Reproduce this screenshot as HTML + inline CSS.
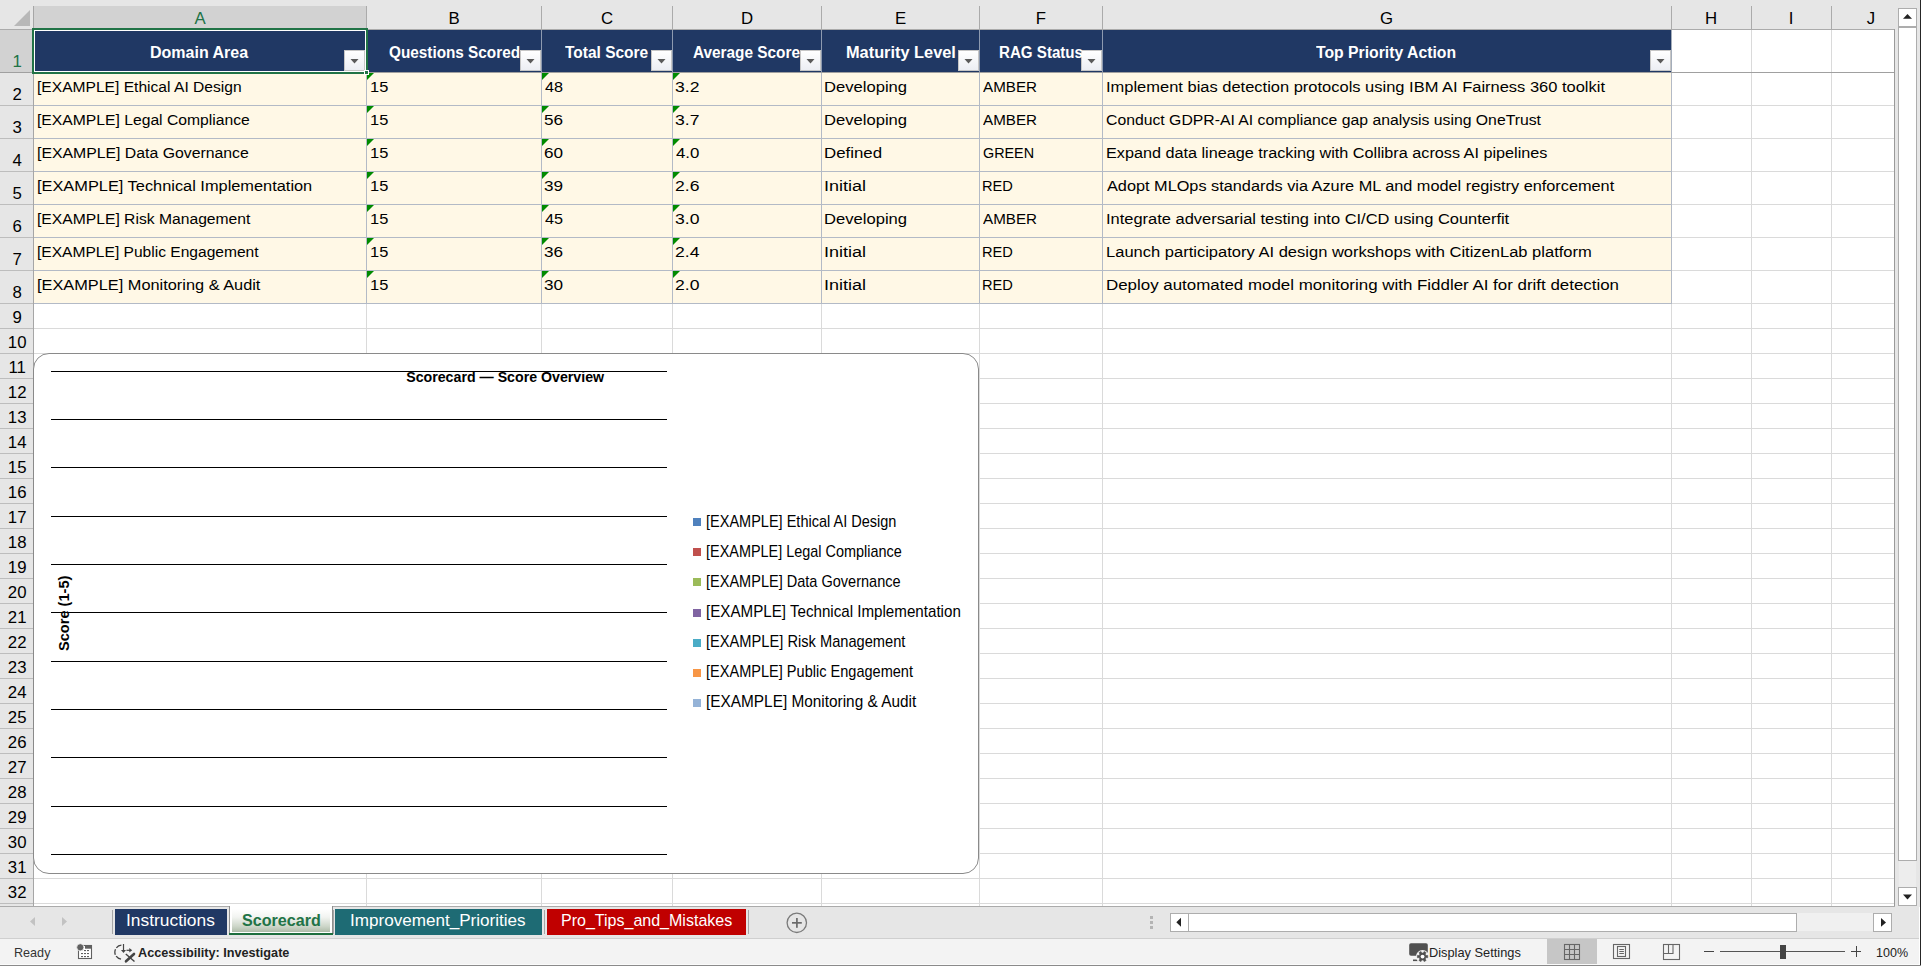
<!DOCTYPE html><html><head><meta charset="utf-8"><style>html,body{margin:0;padding:0;}body{width:1921px;height:966px;overflow:hidden;position:relative;font-family:"Liberation Sans",sans-serif;}body>div,body>svg{position:absolute;}.t{position:absolute;white-space:pre;line-height:1;transform-origin:0 0;}.dd{width:19px;height:19px;border:1px solid #c6c6c6;background:linear-gradient(#ffffff,#eceef3);box-sizing:content-box;}.dd svg{position:absolute;left:0;top:0}</style></head><body><div style="left:0px;top:0px;width:1921px;height:966px;background:#ffffff;"></div><div style="left:0px;top:0px;width:1921px;height:29px;background:#e6e6e6;"></div><div style="left:34px;top:6px;width:332px;height:23px;background:#d2d2d2;"></div><div style="left:366px;top:6px;width:1px;height:23px;background:#ababab;"></div><div style="left:541px;top:6px;width:1px;height:23px;background:#ababab;"></div><div style="left:672px;top:6px;width:1px;height:23px;background:#ababab;"></div><div style="left:821px;top:6px;width:1px;height:23px;background:#ababab;"></div><div style="left:979px;top:6px;width:1px;height:23px;background:#ababab;"></div><div style="left:1102px;top:6px;width:1px;height:23px;background:#ababab;"></div><div style="left:1671px;top:6px;width:1px;height:23px;background:#ababab;"></div><div style="left:1751px;top:6px;width:1px;height:23px;background:#ababab;"></div><div style="left:1831px;top:6px;width:1px;height:23px;background:#ababab;"></div><div style="left:0px;top:29px;width:1895px;height:1px;background:#ababab;"></div><div style="left:0px;top:30px;width:33px;height:876px;background:#e6e6e6;"></div><div style="left:0px;top:30px;width:33px;height:42px;background:#d2d2d2;"></div><div style="left:33px;top:6px;width:1px;height:900px;background:#a6a6a6;"></div><div style="left:0px;top:72px;width:33px;height:1px;background:#bdbdbd;"></div><div style="left:0px;top:105px;width:33px;height:1px;background:#bdbdbd;"></div><div style="left:0px;top:138px;width:33px;height:1px;background:#bdbdbd;"></div><div style="left:0px;top:171px;width:33px;height:1px;background:#bdbdbd;"></div><div style="left:0px;top:204px;width:33px;height:1px;background:#bdbdbd;"></div><div style="left:0px;top:237px;width:33px;height:1px;background:#bdbdbd;"></div><div style="left:0px;top:270px;width:33px;height:1px;background:#bdbdbd;"></div><div style="left:0px;top:303px;width:33px;height:1px;background:#bdbdbd;"></div><div style="left:0px;top:328px;width:33px;height:1px;background:#bdbdbd;"></div><div style="left:0px;top:353px;width:33px;height:1px;background:#bdbdbd;"></div><div style="left:0px;top:378px;width:33px;height:1px;background:#bdbdbd;"></div><div style="left:0px;top:403px;width:33px;height:1px;background:#bdbdbd;"></div><div style="left:0px;top:428px;width:33px;height:1px;background:#bdbdbd;"></div><div style="left:0px;top:453px;width:33px;height:1px;background:#bdbdbd;"></div><div style="left:0px;top:478px;width:33px;height:1px;background:#bdbdbd;"></div><div style="left:0px;top:503px;width:33px;height:1px;background:#bdbdbd;"></div><div style="left:0px;top:528px;width:33px;height:1px;background:#bdbdbd;"></div><div style="left:0px;top:553px;width:33px;height:1px;background:#bdbdbd;"></div><div style="left:0px;top:578px;width:33px;height:1px;background:#bdbdbd;"></div><div style="left:0px;top:603px;width:33px;height:1px;background:#bdbdbd;"></div><div style="left:0px;top:628px;width:33px;height:1px;background:#bdbdbd;"></div><div style="left:0px;top:653px;width:33px;height:1px;background:#bdbdbd;"></div><div style="left:0px;top:678px;width:33px;height:1px;background:#bdbdbd;"></div><div style="left:0px;top:703px;width:33px;height:1px;background:#bdbdbd;"></div><div style="left:0px;top:728px;width:33px;height:1px;background:#bdbdbd;"></div><div style="left:0px;top:753px;width:33px;height:1px;background:#bdbdbd;"></div><div style="left:0px;top:778px;width:33px;height:1px;background:#bdbdbd;"></div><div style="left:0px;top:803px;width:33px;height:1px;background:#bdbdbd;"></div><div style="left:0px;top:828px;width:33px;height:1px;background:#bdbdbd;"></div><div style="left:0px;top:853px;width:33px;height:1px;background:#bdbdbd;"></div><div style="left:0px;top:878px;width:33px;height:1px;background:#bdbdbd;"></div><div style="left:0px;top:903px;width:33px;height:1px;background:#bdbdbd;"></div><svg style="left:13px;top:9px" width="18" height="18"><polygon points="17,1 17,17 1,17" fill="#b8b8b8"/></svg><div style="left:34px;top:105px;width:1860px;height:1px;background:#dadada;"></div><div style="left:34px;top:138px;width:1860px;height:1px;background:#dadada;"></div><div style="left:34px;top:171px;width:1860px;height:1px;background:#dadada;"></div><div style="left:34px;top:204px;width:1860px;height:1px;background:#dadada;"></div><div style="left:34px;top:237px;width:1860px;height:1px;background:#dadada;"></div><div style="left:34px;top:270px;width:1860px;height:1px;background:#dadada;"></div><div style="left:34px;top:303px;width:1860px;height:1px;background:#dadada;"></div><div style="left:34px;top:328px;width:1860px;height:1px;background:#dadada;"></div><div style="left:34px;top:353px;width:1860px;height:1px;background:#dadada;"></div><div style="left:34px;top:378px;width:1860px;height:1px;background:#dadada;"></div><div style="left:34px;top:403px;width:1860px;height:1px;background:#dadada;"></div><div style="left:34px;top:428px;width:1860px;height:1px;background:#dadada;"></div><div style="left:34px;top:453px;width:1860px;height:1px;background:#dadada;"></div><div style="left:34px;top:478px;width:1860px;height:1px;background:#dadada;"></div><div style="left:34px;top:503px;width:1860px;height:1px;background:#dadada;"></div><div style="left:34px;top:528px;width:1860px;height:1px;background:#dadada;"></div><div style="left:34px;top:553px;width:1860px;height:1px;background:#dadada;"></div><div style="left:34px;top:578px;width:1860px;height:1px;background:#dadada;"></div><div style="left:34px;top:603px;width:1860px;height:1px;background:#dadada;"></div><div style="left:34px;top:628px;width:1860px;height:1px;background:#dadada;"></div><div style="left:34px;top:653px;width:1860px;height:1px;background:#dadada;"></div><div style="left:34px;top:678px;width:1860px;height:1px;background:#dadada;"></div><div style="left:34px;top:703px;width:1860px;height:1px;background:#dadada;"></div><div style="left:34px;top:728px;width:1860px;height:1px;background:#dadada;"></div><div style="left:34px;top:753px;width:1860px;height:1px;background:#dadada;"></div><div style="left:34px;top:778px;width:1860px;height:1px;background:#dadada;"></div><div style="left:34px;top:803px;width:1860px;height:1px;background:#dadada;"></div><div style="left:34px;top:828px;width:1860px;height:1px;background:#dadada;"></div><div style="left:34px;top:853px;width:1860px;height:1px;background:#dadada;"></div><div style="left:34px;top:878px;width:1860px;height:1px;background:#dadada;"></div><div style="left:34px;top:903px;width:1860px;height:1px;background:#dadada;"></div><div style="left:366px;top:30px;width:1px;height:876px;background:#dadada;"></div><div style="left:541px;top:30px;width:1px;height:876px;background:#dadada;"></div><div style="left:672px;top:30px;width:1px;height:876px;background:#dadada;"></div><div style="left:821px;top:30px;width:1px;height:876px;background:#dadada;"></div><div style="left:979px;top:30px;width:1px;height:876px;background:#dadada;"></div><div style="left:1102px;top:30px;width:1px;height:876px;background:#dadada;"></div><div style="left:1671px;top:30px;width:1px;height:876px;background:#dadada;"></div><div style="left:1751px;top:30px;width:1px;height:876px;background:#dadada;"></div><div style="left:1831px;top:30px;width:1px;height:876px;background:#dadada;"></div><div style="left:0px;top:72px;width:1895px;height:1px;background:#a0a0a0;"></div><div style="left:1894px;top:29px;width:1px;height:877px;background:#9a9a9a;"></div><div style="left:34px;top:30px;width:1637px;height:42px;background:#203864;"></div><div style="left:34px;top:73px;width:1637px;height:32px;background:#fff8e6;"></div><div style="left:34px;top:106px;width:1637px;height:32px;background:#fff8e6;"></div><div style="left:34px;top:139px;width:1637px;height:32px;background:#fff8e6;"></div><div style="left:34px;top:172px;width:1637px;height:32px;background:#fff8e6;"></div><div style="left:34px;top:205px;width:1637px;height:32px;background:#fff8e6;"></div><div style="left:34px;top:238px;width:1637px;height:32px;background:#fff8e6;"></div><div style="left:34px;top:271px;width:1637px;height:32px;background:#fff8e6;"></div><div style="left:34px;top:105px;width:1637px;height:1px;background:#b3bac6;"></div><div style="left:34px;top:138px;width:1637px;height:1px;background:#b3bac6;"></div><div style="left:34px;top:171px;width:1637px;height:1px;background:#b3bac6;"></div><div style="left:34px;top:204px;width:1637px;height:1px;background:#b3bac6;"></div><div style="left:34px;top:237px;width:1637px;height:1px;background:#b3bac6;"></div><div style="left:34px;top:270px;width:1637px;height:1px;background:#b3bac6;"></div><div style="left:34px;top:303px;width:1637px;height:1px;background:#b3bac6;"></div><div style="left:366px;top:73px;width:1px;height:231px;background:#b3bac6;"></div><div style="left:541px;top:73px;width:1px;height:231px;background:#b3bac6;"></div><div style="left:672px;top:73px;width:1px;height:231px;background:#b3bac6;"></div><div style="left:821px;top:73px;width:1px;height:231px;background:#b3bac6;"></div><div style="left:979px;top:73px;width:1px;height:231px;background:#b3bac6;"></div><div style="left:1102px;top:73px;width:1px;height:231px;background:#b3bac6;"></div><div style="left:1671px;top:73px;width:1px;height:231px;background:#b3bac6;"></div><div style="left:366px;top:30px;width:1px;height:42px;background:#8d9ab0;"></div><div style="left:541px;top:30px;width:1px;height:42px;background:#8d9ab0;"></div><div style="left:672px;top:30px;width:1px;height:42px;background:#8d9ab0;"></div><div style="left:821px;top:30px;width:1px;height:42px;background:#8d9ab0;"></div><div style="left:979px;top:30px;width:1px;height:42px;background:#8d9ab0;"></div><div style="left:1102px;top:30px;width:1px;height:42px;background:#8d9ab0;"></div><div style="left:1671px;top:30px;width:1px;height:42px;background:#a4adba;"></div><div class="dd" style="left:344px;top:50px"><svg width="19" height="19"><polygon points="5.5,8 13.5,8 9.5,12.5" fill="#5a5a5a"/></svg></div><div class="dd" style="left:520px;top:50px"><svg width="19" height="19"><polygon points="5.5,8 13.5,8 9.5,12.5" fill="#5a5a5a"/></svg></div><div class="dd" style="left:651px;top:50px"><svg width="19" height="19"><polygon points="5.5,8 13.5,8 9.5,12.5" fill="#5a5a5a"/></svg></div><div class="dd" style="left:800px;top:50px"><svg width="19" height="19"><polygon points="5.5,8 13.5,8 9.5,12.5" fill="#5a5a5a"/></svg></div><div class="dd" style="left:958px;top:50px"><svg width="19" height="19"><polygon points="5.5,8 13.5,8 9.5,12.5" fill="#5a5a5a"/></svg></div><div class="dd" style="left:1081px;top:50px"><svg width="19" height="19"><polygon points="5.5,8 13.5,8 9.5,12.5" fill="#5a5a5a"/></svg></div><div class="dd" style="left:1650px;top:50px"><svg width="19" height="19"><polygon points="5.5,8 13.5,8 9.5,12.5" fill="#5a5a5a"/></svg></div><svg style="left:367px;top:73px" width="8" height="8"><polygon points="0,0 7,0 0,7" fill="#008a00"/></svg><svg style="left:542px;top:73px" width="8" height="8"><polygon points="0,0 7,0 0,7" fill="#008a00"/></svg><svg style="left:673px;top:73px" width="8" height="8"><polygon points="0,0 7,0 0,7" fill="#008a00"/></svg><svg style="left:367px;top:106px" width="8" height="8"><polygon points="0,0 7,0 0,7" fill="#008a00"/></svg><svg style="left:542px;top:106px" width="8" height="8"><polygon points="0,0 7,0 0,7" fill="#008a00"/></svg><svg style="left:673px;top:106px" width="8" height="8"><polygon points="0,0 7,0 0,7" fill="#008a00"/></svg><svg style="left:367px;top:139px" width="8" height="8"><polygon points="0,0 7,0 0,7" fill="#008a00"/></svg><svg style="left:542px;top:139px" width="8" height="8"><polygon points="0,0 7,0 0,7" fill="#008a00"/></svg><svg style="left:673px;top:139px" width="8" height="8"><polygon points="0,0 7,0 0,7" fill="#008a00"/></svg><svg style="left:367px;top:172px" width="8" height="8"><polygon points="0,0 7,0 0,7" fill="#008a00"/></svg><svg style="left:542px;top:172px" width="8" height="8"><polygon points="0,0 7,0 0,7" fill="#008a00"/></svg><svg style="left:673px;top:172px" width="8" height="8"><polygon points="0,0 7,0 0,7" fill="#008a00"/></svg><svg style="left:367px;top:205px" width="8" height="8"><polygon points="0,0 7,0 0,7" fill="#008a00"/></svg><svg style="left:542px;top:205px" width="8" height="8"><polygon points="0,0 7,0 0,7" fill="#008a00"/></svg><svg style="left:673px;top:205px" width="8" height="8"><polygon points="0,0 7,0 0,7" fill="#008a00"/></svg><svg style="left:367px;top:238px" width="8" height="8"><polygon points="0,0 7,0 0,7" fill="#008a00"/></svg><svg style="left:542px;top:238px" width="8" height="8"><polygon points="0,0 7,0 0,7" fill="#008a00"/></svg><svg style="left:673px;top:238px" width="8" height="8"><polygon points="0,0 7,0 0,7" fill="#008a00"/></svg><svg style="left:367px;top:271px" width="8" height="8"><polygon points="0,0 7,0 0,7" fill="#008a00"/></svg><svg style="left:542px;top:271px" width="8" height="8"><polygon points="0,0 7,0 0,7" fill="#008a00"/></svg><svg style="left:673px;top:271px" width="8" height="8"><polygon points="0,0 7,0 0,7" fill="#008a00"/></svg><div style="left:32px;top:28px;width:332px;height:42px;border:2px solid #217346;background:transparent"></div><div style="left:34px;top:30px;width:332px;height:42px;border:1px solid #fff;background:transparent;box-sizing:border-box"></div><div style="left:364px;top:70px;width:3px;height:3px;background:#217346;border:1px solid #fff;box-sizing:content-box"></div><div style="left:33px;top:353px;width:944px;height:519px;border:1px solid #8a8a8a;border-radius:16px;background:#fff"></div><div style="left:51px;top:371px;width:616px;height:1px;background:#000"></div><div style="left:51px;top:419px;width:616px;height:1px;background:#000"></div><div style="left:51px;top:467px;width:616px;height:1px;background:#000"></div><div style="left:51px;top:516px;width:616px;height:1px;background:#000"></div><div style="left:51px;top:564px;width:616px;height:1px;background:#000"></div><div style="left:51px;top:612px;width:616px;height:1px;background:#000"></div><div style="left:51px;top:661px;width:616px;height:1px;background:#000"></div><div style="left:51px;top:709px;width:616px;height:1px;background:#000"></div><div style="left:51px;top:757px;width:616px;height:1px;background:#000"></div><div style="left:51px;top:806px;width:616px;height:1px;background:#000"></div><div style="left:51px;top:854px;width:616px;height:1px;background:#000"></div><div style="left:693px;top:518px;width:8px;height:8px;background:#4f81bd;"></div><div style="left:693px;top:548px;width:8px;height:8px;background:#c0504d;"></div><div style="left:693px;top:578px;width:8px;height:8px;background:#9bbb59;"></div><div style="left:693px;top:609px;width:8px;height:8px;background:#8064a2;"></div><div style="left:693px;top:639px;width:8px;height:8px;background:#4bacc6;"></div><div style="left:693px;top:669px;width:8px;height:8px;background:#f79646;"></div><div style="left:693px;top:699px;width:8px;height:8px;background:#95b3d7;"></div><div class="t" style="left:0px;top:0px;width:0;height:0;overflow:visible"><div style="position:absolute;left:57px;top:651px;transform-origin:0 0;transform:rotate(-90deg);font:700 14.6px 'Liberation Sans';white-space:pre;line-height:1">Score (1-5)</div></div><div style="left:1895px;top:0px;width:26px;height:907px;background:#e6e6e6;"></div><div style="left:1898px;top:8px;width:17px;height:17px;border:1px solid #adadad;background:#fff"></div><svg style="left:1898px;top:8px" width="19" height="19"><polygon points="5,10.8 14,10.8 9.5,6" fill="#222"/></svg><div style="left:1898px;top:27px;width:17px;height:832px;border:1px solid #adadad;background:#fff"></div><div style="left:1899px;top:861px;width:17px;height:26px;background:#ededed;"></div><div style="left:1898px;top:887px;width:17px;height:17px;border:1px solid #adadad;background:#fff"></div><svg style="left:1898px;top:887px" width="19" height="19"><polygon points="5,7.4 14,7.4 9.5,12.4" fill="#222"/></svg><div style="left:1920px;top:0px;width:1px;height:966px;background:#262626;"></div><div style="left:0px;top:906px;width:1895px;height:1px;background:#ababab;"></div><div style="left:0px;top:907px;width:1919px;height:31px;background:#e6e6e6;"></div><div style="left:0px;top:938px;width:1919px;height:1px;background:#cfcfcf;"></div><svg style="left:28px;top:916px" width="42" height="12"><polygon points="7,1 7,10 2,5.5" fill="#c2c2c2"/><polygon points="34,1 34,10 39,5.5" fill="#c2c2c2"/></svg><div style="left:112px;top:910px;width:1px;height:24px;background:#a6a6a6;"></div><div style="left:115px;top:909px;width:112px;height:26px;background:#203864;"></div><div style="left:229px;top:906px;width:104px;height:29px;background:#fff;border-left:1px solid #8e8e8e;border-right:1px solid #8e8e8e;box-sizing:border-box"></div><div style="left:232px;top:909px;width:98px;height:23px;background:linear-gradient(#ffffff 0%,#f2f4f1 35%,#cdd6c9 75%,#aebba8 100%)"></div><div style="left:229px;top:933px;width:104px;height:2px;background:#1d6e3d;"></div><div style="left:333px;top:910px;width:1px;height:24px;background:#a6a6a6;"></div><div style="left:335px;top:909px;width:207px;height:26px;background:#1e6b74;"></div><div style="left:544px;top:910px;width:1px;height:24px;background:#a6a6a6;"></div><div style="left:547px;top:909px;width:199px;height:26px;background:#c00000;"></div><div style="left:748px;top:910px;width:1px;height:24px;background:#a6a6a6;"></div><svg style="left:785px;top:911px" width="24" height="24"><circle cx="11.8" cy="11.8" r="9.7" fill="none" stroke="#7a7a7a" stroke-width="1.3"/><rect x="7" y="11" width="9.8" height="1.7" fill="#6a6a6a"/><rect x="11.05" y="7" width="1.7" height="9.8" fill="#6a6a6a"/></svg><div style="left:1150px;top:916px;width:3px;height:3px;background:#b4b4b4;"></div><div style="left:1150px;top:921px;width:3px;height:3px;background:#b4b4b4;"></div><div style="left:1150px;top:926px;width:3px;height:3px;background:#b4b4b4;"></div><div style="left:1170px;top:913px;width:703px;height:18px;background:#f0f0f0"></div><div style="left:1170px;top:913px;width:17px;height:17px;border:1px solid #adadad;background:#fff"></div><svg style="left:1170px;top:913px" width="19" height="19"><polygon points="11,4.7 11,13.8 6.3,9.25" fill="#222"/></svg><div style="left:1188px;top:913px;width:607px;height:17px;border:1px solid #adadad;background:#fff"></div><div style="left:1873px;top:913px;width:17px;height:17px;border:1px solid #adadad;background:#fff"></div><svg style="left:1873px;top:913px" width="19" height="19"><polygon points="8,5 8,13.8 13,9.4" fill="#222"/></svg><div style="left:0px;top:939px;width:1919px;height:27px;background:#f3f3f3;"></div><svg style="left:72px;top:940px" width="24" height="24"><rect x="6.5" y="5.5" width="13" height="13" fill="#fff" stroke="#606060" stroke-width="1.1"/><rect x="13" y="5" width="7" height="3.7" fill="#606060"/><circle cx="8.3" cy="7.3" r="3.6" fill="#606060" stroke="#f3f3f3" stroke-width="0.8"/><g fill="#606060"><rect x="12" y="10" width="2" height="1.1"/><rect x="15" y="10" width="2" height="1.1"/><rect x="9" y="13" width="2" height="1.1"/><rect x="12" y="13" width="2" height="1.1"/><rect x="15" y="13" width="2" height="1.1"/><rect x="9" y="16" width="2" height="1.1"/><rect x="12" y="16" width="2" height="1.1"/><rect x="15" y="16" width="2" height="1.1"/></g></svg><svg style="left:110px;top:940px" width="28" height="26"><path d="M11.4 5.2 A7 7 0 0 0 12.3 19.2" fill="none" stroke="#444" stroke-width="1.3" stroke-dasharray="5.8 1.6"/><path d="M13.5 4 V11" stroke="#444" stroke-width="1.2"/><polygon points="11,10 16,10 13.5,13" fill="#444"/><path d="M16.5 10.3 H20" stroke="#444" stroke-width="1.2"/><polygon points="19.3,8 22.2,10.3 19.3,12.6" fill="#444"/><path d="M16 21.3 L24 14" stroke="#444" stroke-width="2.6" stroke-linecap="round"/><path d="M15.8 14 L24.5 21.5" stroke="#444" stroke-width="1.4"/></svg><svg style="left:1404px;top:938px" width="28" height="28"><rect x="5.2" y="5.2" width="18.6" height="12.5" rx="1.8" fill="#505050"/><path d="M9 22.3 H13.6" stroke="#505050" stroke-width="1.6"/><circle cx="18.55" cy="18.55" r="6.6" fill="#f3f3f3"/><polygon points="21.99,17.49 23.72,17.39 23.72,19.71 21.99,19.61 21.19,21.00 22.14,22.45 20.13,23.61 19.35,22.06 17.75,22.06 16.97,23.61 14.96,22.45 15.91,21.00 15.11,19.61 13.38,19.71 13.38,17.39 15.11,17.49 15.91,16.10 14.96,14.65 16.97,13.49 17.75,15.04 19.35,15.04 20.13,13.49 22.14,14.65 21.19,16.10" fill="#505050" stroke="#505050" stroke-width="0.6"/><circle cx="18.55" cy="18.55" r="1.9" fill="#fff"/></svg><div style="left:1547px;top:939px;width:50px;height:26px;background:#c6c6c6;"></div><svg style="left:1560px;top:940px" width="24" height="24"><g fill="none" stroke="#666" stroke-width="1.1"><rect x="4.5" y="4.5" width="15" height="15"/><path d="M9.5 4.5 V19.5 M14.5 4.5 V19.5 M4.5 9.5 H19.5 M4.5 14.5 H19.5"/></g></svg><svg style="left:1609px;top:940px" width="24" height="24"><g fill="none" stroke="#666" stroke-width="1.1"><rect x="4.5" y="4.5" width="16" height="14"/><rect x="8.5" y="6.5" width="8" height="10"/><path d="M10.3 9.5 H14.9 M10.3 11.5 H14.9 M10.3 13.5 H14.9"/></g></svg><svg style="left:1659px;top:940px" width="24" height="24"><g fill="none" stroke="#666" stroke-width="1.1"><rect x="4.5" y="4.5" width="16" height="15"/><path d="M9.5 4.5 V13.5 M14 4.5 V13.5 H4.5"/></g></svg><div style="left:1704px;top:951px;width:10px;height:1px;background:#444;"></div><div style="left:1720px;top:951px;width:125px;height:1px;background:#555;"></div><div style="left:1780px;top:945px;width:6px;height:14px;background:#444;"></div><div style="left:1851px;top:951px;width:10px;height:1px;background:#444;"></div><div style="left:1855.5px;top:946px;width:1px;height:11px;background:#444;"></div><div style="left:0px;top:964px;width:1919px;height:1px;background:#fbfbfb;"></div><div style="left:0px;top:965px;width:1921px;height:1px;background:#8a8a8a;"></div><div class="t" style="left:150.00px;top:44.56px;font-size:16px;font-weight:700;color:#fff;">Domain Area</div><div class="t" style="left:388.60px;top:44.56px;font-size:16px;font-weight:700;color:#fff;transform:scaleX(0.9568);">Questions Scored</div><div class="t" style="left:565.40px;top:44.56px;font-size:16px;font-weight:700;color:#fff;transform:scaleX(0.9680);">Total Score</div><div class="t" style="left:693.00px;top:44.56px;font-size:16px;font-weight:700;color:#fff;transform:scaleX(0.9599);">Average Score</div><div class="t" style="left:845.98px;top:44.56px;font-size:16px;font-weight:700;color:#fff;transform:scaleX(1.0209);">Maturity Level</div><div class="t" style="left:998.98px;top:44.56px;font-size:16px;font-weight:700;color:#fff;transform:scaleX(0.9450);">RAG Status</div><div class="t" style="left:1316.40px;top:44.56px;font-size:16px;font-weight:700;color:#fff;transform:scaleX(0.9844);">Top Priority Action</div><div class="t" style="left:36.80px;top:79.08px;font-size:15.5px;font-weight:400;color:#000;transform:scaleX(1.0063);">[EXAMPLE] Ethical AI Design</div><div class="t" style="left:369.56px;top:79.08px;font-size:15.5px;font-weight:400;color:#000;transform:scaleX(1.0606);">15</div><div class="t" style="left:544.60px;top:79.08px;font-size:15.5px;font-weight:400;color:#000;transform:scaleX(1.0435);">48</div><div class="t" style="left:674.53px;top:79.08px;font-size:15.5px;font-weight:400;color:#000;transform:scaleX(1.1347);">3.2</div><div class="t" style="left:824.18px;top:79.08px;font-size:15.5px;font-weight:400;color:#000;transform:scaleX(1.0708);">Developing</div><div class="t" style="left:983.20px;top:79.08px;font-size:15.5px;font-weight:400;color:#000;transform:scaleX(0.9798);">AMBER</div><div class="t" style="left:1105.60px;top:79.08px;font-size:15.5px;font-weight:400;color:#000;transform:scaleX(1.0627);">Implement bias detection protocols using IBM AI Fairness 360 toolkit</div><div class="t" style="left:36.79px;top:112.08px;font-size:15.5px;font-weight:400;color:#000;transform:scaleX(1.0123);">[EXAMPLE] Legal Compliance</div><div class="t" style="left:369.56px;top:112.08px;font-size:15.5px;font-weight:400;color:#000;transform:scaleX(1.0606);">15</div><div class="t" style="left:543.54px;top:112.08px;font-size:15.5px;font-weight:400;color:#000;transform:scaleX(1.1049);">56</div><div class="t" style="left:674.53px;top:112.08px;font-size:15.5px;font-weight:400;color:#000;transform:scaleX(1.1347);">3.7</div><div class="t" style="left:824.18px;top:112.08px;font-size:15.5px;font-weight:400;color:#000;transform:scaleX(1.0708);">Developing</div><div class="t" style="left:983.20px;top:112.08px;font-size:15.5px;font-weight:400;color:#000;transform:scaleX(0.9798);">AMBER</div><div class="t" style="left:1105.60px;top:112.08px;font-size:15.5px;font-weight:400;color:#000;transform:scaleX(1.0173);">Conduct GDPR-AI AI compliance gap analysis using OneTrust</div><div class="t" style="left:36.79px;top:145.08px;font-size:15.5px;font-weight:400;color:#000;transform:scaleX(1.0201);">[EXAMPLE] Data Governance</div><div class="t" style="left:369.56px;top:145.08px;font-size:15.5px;font-weight:400;color:#000;transform:scaleX(1.0606);">15</div><div class="t" style="left:543.54px;top:145.08px;font-size:15.5px;font-weight:400;color:#000;transform:scaleX(1.1049);">60</div><div class="t" style="left:675.60px;top:145.08px;font-size:15.5px;font-weight:400;color:#000;transform:scaleX(1.0853);">4.0</div><div class="t" style="left:824.17px;top:145.08px;font-size:15.5px;font-weight:400;color:#000;transform:scaleX(1.0868);">Defined</div><div class="t" style="left:983.21px;top:145.08px;font-size:15.5px;font-weight:400;color:#000;transform:scaleX(0.9255);">GREEN</div><div class="t" style="left:1105.60px;top:145.08px;font-size:15.5px;font-weight:400;color:#000;transform:scaleX(1.0455);">Expand data lineage tracking with Collibra across AI pipelines</div><div class="t" style="left:36.79px;top:178.08px;font-size:15.5px;font-weight:400;color:#000;transform:scaleX(1.0554);">[EXAMPLE] Technical Implementation</div><div class="t" style="left:369.56px;top:178.08px;font-size:15.5px;font-weight:400;color:#000;transform:scaleX(1.0606);">15</div><div class="t" style="left:543.54px;top:178.08px;font-size:15.5px;font-weight:400;color:#000;transform:scaleX(1.1049);">39</div><div class="t" style="left:674.53px;top:178.08px;font-size:15.5px;font-weight:400;color:#000;transform:scaleX(1.1347);">2.6</div><div class="t" style="left:824.17px;top:178.08px;font-size:15.5px;font-weight:400;color:#000;transform:scaleX(1.1624);">Initial</div><div class="t" style="left:982.18px;top:178.08px;font-size:15.5px;font-weight:400;color:#000;transform:scaleX(0.9432);">RED</div><div class="t" style="left:1106.60px;top:178.08px;font-size:15.5px;font-weight:400;color:#000;transform:scaleX(1.0506);">Adopt MLOps standards via Azure ML and model registry enforcement</div><div class="t" style="left:36.80px;top:211.08px;font-size:15.5px;font-weight:400;color:#000;transform:scaleX(1.0111);">[EXAMPLE] Risk Management</div><div class="t" style="left:369.56px;top:211.08px;font-size:15.5px;font-weight:400;color:#000;transform:scaleX(1.0606);">15</div><div class="t" style="left:544.60px;top:211.08px;font-size:15.5px;font-weight:400;color:#000;transform:scaleX(1.0435);">45</div><div class="t" style="left:674.53px;top:211.08px;font-size:15.5px;font-weight:400;color:#000;transform:scaleX(1.1347);">3.0</div><div class="t" style="left:824.18px;top:211.08px;font-size:15.5px;font-weight:400;color:#000;transform:scaleX(1.0708);">Developing</div><div class="t" style="left:983.20px;top:211.08px;font-size:15.5px;font-weight:400;color:#000;transform:scaleX(0.9798);">AMBER</div><div class="t" style="left:1105.60px;top:211.08px;font-size:15.5px;font-weight:400;color:#000;transform:scaleX(1.0612);">Integrate adversarial testing into CI/CD using Counterfit</div><div class="t" style="left:36.80px;top:244.08px;font-size:15.5px;font-weight:400;color:#000;transform:scaleX(1.0046);">[EXAMPLE] Public Engagement</div><div class="t" style="left:369.56px;top:244.08px;font-size:15.5px;font-weight:400;color:#000;transform:scaleX(1.0606);">15</div><div class="t" style="left:543.54px;top:244.08px;font-size:15.5px;font-weight:400;color:#000;transform:scaleX(1.1049);">36</div><div class="t" style="left:674.53px;top:244.08px;font-size:15.5px;font-weight:400;color:#000;transform:scaleX(1.1347);">2.4</div><div class="t" style="left:824.17px;top:244.08px;font-size:15.5px;font-weight:400;color:#000;transform:scaleX(1.1624);">Initial</div><div class="t" style="left:982.18px;top:244.08px;font-size:15.5px;font-weight:400;color:#000;transform:scaleX(0.9432);">RED</div><div class="t" style="left:1105.59px;top:244.08px;font-size:15.5px;font-weight:400;color:#000;transform:scaleX(1.0659);">Launch participatory AI design workshops with CitizenLab platform</div><div class="t" style="left:36.80px;top:277.08px;font-size:15.5px;font-weight:400;color:#000;transform:scaleX(1.0541);">[EXAMPLE] Monitoring &amp; Audit</div><div class="t" style="left:369.56px;top:277.08px;font-size:15.5px;font-weight:400;color:#000;transform:scaleX(1.0606);">15</div><div class="t" style="left:543.54px;top:277.08px;font-size:15.5px;font-weight:400;color:#000;transform:scaleX(1.1049);">30</div><div class="t" style="left:674.53px;top:277.08px;font-size:15.5px;font-weight:400;color:#000;transform:scaleX(1.1347);">2.0</div><div class="t" style="left:824.17px;top:277.08px;font-size:15.5px;font-weight:400;color:#000;transform:scaleX(1.1624);">Initial</div><div class="t" style="left:982.18px;top:277.08px;font-size:15.5px;font-weight:400;color:#000;transform:scaleX(0.9432);">RED</div><div class="t" style="left:1105.60px;top:277.08px;font-size:15.5px;font-weight:400;color:#000;transform:scaleX(1.0906);">Deploy automated model monitoring with Fiddler AI for drift detection</div><div class="t" style="left:194.40px;top:10.78px;font-size:16.8px;font-weight:400;color:#217346;">A</div><div class="t" style="left:448.40px;top:10.78px;font-size:16.8px;font-weight:400;color:#000;">B</div><div class="t" style="left:600.94px;top:10.78px;font-size:16.8px;font-weight:400;color:#000;">C</div><div class="t" style="left:740.94px;top:10.78px;font-size:16.8px;font-weight:400;color:#000;">D</div><div class="t" style="left:894.90px;top:10.78px;font-size:16.8px;font-weight:400;color:#000;">E</div><div class="t" style="left:1035.87px;top:10.78px;font-size:16.8px;font-weight:400;color:#000;">F</div><div class="t" style="left:1379.97px;top:10.78px;font-size:16.8px;font-weight:400;color:#000;">G</div><div class="t" style="left:1704.94px;top:10.78px;font-size:16.8px;font-weight:400;color:#000;">H</div><div class="t" style="left:1788.66px;top:10.78px;font-size:16.8px;font-weight:400;color:#000;">I</div><div class="t" style="left:1866.80px;top:10.78px;font-size:16.8px;font-weight:400;color:#000;">J</div><div class="t" style="left:12.53px;top:53.78px;font-size:16.8px;font-weight:400;color:#217346;">1</div><div class="t" style="left:12.53px;top:86.78px;font-size:16.8px;font-weight:400;color:#000;">2</div><div class="t" style="left:12.53px;top:119.78px;font-size:16.8px;font-weight:400;color:#000;">3</div><div class="t" style="left:12.53px;top:152.78px;font-size:16.8px;font-weight:400;color:#000;">4</div><div class="t" style="left:12.53px;top:185.78px;font-size:16.8px;font-weight:400;color:#000;">5</div><div class="t" style="left:12.53px;top:218.78px;font-size:16.8px;font-weight:400;color:#000;">6</div><div class="t" style="left:12.53px;top:251.78px;font-size:16.8px;font-weight:400;color:#000;">7</div><div class="t" style="left:12.53px;top:284.78px;font-size:16.8px;font-weight:400;color:#000;">8</div><div class="t" style="left:12.53px;top:309.78px;font-size:16.8px;font-weight:400;color:#000;">9</div><div class="t" style="left:7.86px;top:334.78px;font-size:16.8px;font-weight:400;color:#000;">10</div><div class="t" style="left:8.49px;top:359.78px;font-size:16.8px;font-weight:400;color:#000;">11</div><div class="t" style="left:7.86px;top:384.78px;font-size:16.8px;font-weight:400;color:#000;">12</div><div class="t" style="left:7.86px;top:409.78px;font-size:16.8px;font-weight:400;color:#000;">13</div><div class="t" style="left:7.86px;top:434.78px;font-size:16.8px;font-weight:400;color:#000;">14</div><div class="t" style="left:7.86px;top:459.78px;font-size:16.8px;font-weight:400;color:#000;">15</div><div class="t" style="left:7.86px;top:484.78px;font-size:16.8px;font-weight:400;color:#000;">16</div><div class="t" style="left:7.86px;top:509.78px;font-size:16.8px;font-weight:400;color:#000;">17</div><div class="t" style="left:7.86px;top:534.78px;font-size:16.8px;font-weight:400;color:#000;">18</div><div class="t" style="left:7.86px;top:559.78px;font-size:16.8px;font-weight:400;color:#000;">19</div><div class="t" style="left:7.86px;top:584.78px;font-size:16.8px;font-weight:400;color:#000;">20</div><div class="t" style="left:7.86px;top:609.78px;font-size:16.8px;font-weight:400;color:#000;">21</div><div class="t" style="left:7.86px;top:634.78px;font-size:16.8px;font-weight:400;color:#000;">22</div><div class="t" style="left:7.86px;top:659.78px;font-size:16.8px;font-weight:400;color:#000;">23</div><div class="t" style="left:7.86px;top:684.78px;font-size:16.8px;font-weight:400;color:#000;">24</div><div class="t" style="left:7.86px;top:709.78px;font-size:16.8px;font-weight:400;color:#000;">25</div><div class="t" style="left:7.86px;top:734.78px;font-size:16.8px;font-weight:400;color:#000;">26</div><div class="t" style="left:7.86px;top:759.78px;font-size:16.8px;font-weight:400;color:#000;">27</div><div class="t" style="left:7.86px;top:784.78px;font-size:16.8px;font-weight:400;color:#000;">28</div><div class="t" style="left:7.86px;top:809.78px;font-size:16.8px;font-weight:400;color:#000;">29</div><div class="t" style="left:7.86px;top:834.78px;font-size:16.8px;font-weight:400;color:#000;">30</div><div class="t" style="left:7.86px;top:859.78px;font-size:16.8px;font-weight:400;color:#000;">31</div><div class="t" style="left:7.86px;top:884.78px;font-size:16.8px;font-weight:400;color:#000;">32</div><div class="t" style="left:406.20px;top:369.98px;font-size:14.2px;font-weight:700;color:#000;">Scorecard — Score Overview</div><div class="t" style="left:705.99px;top:513.09px;font-size:16.2px;font-weight:400;color:#000;transform:scaleX(0.8967);">[EXAMPLE] Ethical AI Design</div><div class="t" style="left:705.99px;top:543.09px;font-size:16.2px;font-weight:400;color:#000;transform:scaleX(0.8919);">[EXAMPLE] Legal Compliance</div><div class="t" style="left:705.99px;top:573.09px;font-size:16.2px;font-weight:400;color:#000;transform:scaleX(0.8975);">[EXAMPLE] Data Governance</div><div class="t" style="left:705.99px;top:603.09px;font-size:16.2px;font-weight:400;color:#000;transform:scaleX(0.9357);">[EXAMPLE] Technical Implementation</div><div class="t" style="left:706.00px;top:633.09px;font-size:16.2px;font-weight:400;color:#000;transform:scaleX(0.9047);">[EXAMPLE] Risk Management</div><div class="t" style="left:706.00px;top:663.09px;font-size:16.2px;font-weight:400;color:#000;transform:scaleX(0.8986);">[EXAMPLE] Public Engagement</div><div class="t" style="left:706.00px;top:693.09px;font-size:16.2px;font-weight:400;color:#000;transform:scaleX(0.9497);">[EXAMPLE] Monitoring &amp; Audit</div><div class="t" style="left:126.39px;top:912.44px;font-size:17.2px;font-weight:400;color:#fff;transform:scaleX(1.0106);">Instructions</div><div class="t" style="left:241.61px;top:911.89px;font-size:16.2px;font-weight:700;color:#217346;transform:scaleX(0.9953);">Scorecard</div><div class="t" style="left:349.79px;top:912.44px;font-size:17.2px;font-weight:400;color:#fff;transform:scaleX(0.9937);">Improvement_Priorities</div><div class="t" style="left:560.99px;top:912.44px;font-size:17.2px;font-weight:400;color:#fff;transform:scaleX(0.9318);">Pro_Tips_and_Mistakes</div><div class="t" style="left:13.75px;top:947.08px;font-size:12.9px;font-weight:400;color:#333;transform:scaleX(0.9779);">Ready</div><div class="t" style="left:138.00px;top:946.16px;font-size:13.4px;font-weight:700;color:#222;transform:scaleX(0.9462);">Accessibility: Investigate</div><div class="t" style="left:1429.20px;top:947.08px;font-size:12.9px;font-weight:400;color:#222;transform:scaleX(0.9933);">Display Settings</div><div class="t" style="left:1875.97px;top:947.08px;font-size:12.9px;font-weight:400;color:#222;transform:scaleX(0.9712);">100%</div></body></html>
